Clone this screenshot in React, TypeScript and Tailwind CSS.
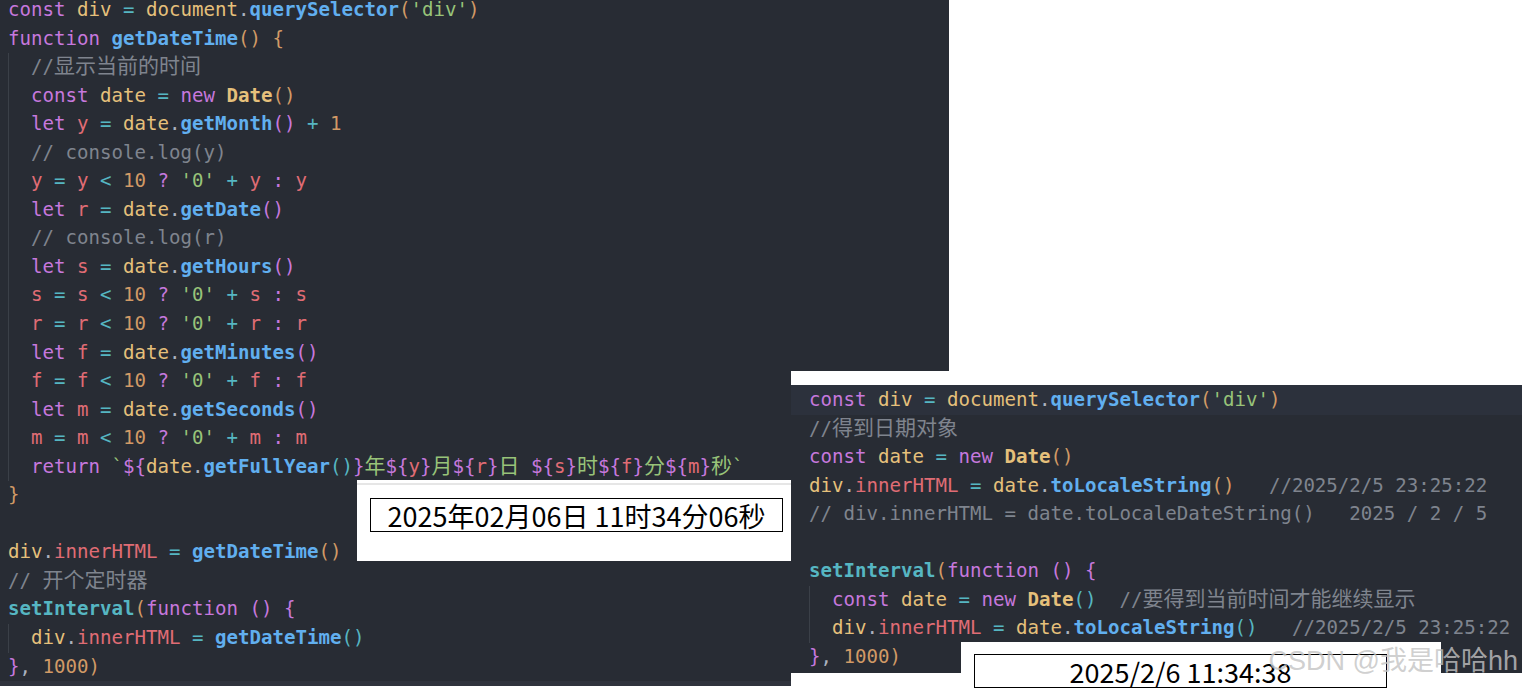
import React from "react";

const C: Record<string, string> = {
  k: "text-[#c678dd]",
  v: "text-[#e5c07b]",
  V: "text-[#e5c07b] font-bold",
  o: "text-[#56b6c2]",
  f: "text-[#61afef] font-bold",
  F: "text-[#56b6c2] font-bold",
  p: "text-[#abb2bf]",
  n: "text-[#d19a66]",
  s: "text-[#98c379]",
  r: "text-[#e06c75]",
  c: "text-[#7f848e]",
  b1: "text-[#d19a66]",
  b2: "text-[#c678dd]",
  b3: "text-[#56b6c2]",
  t: "text-[#c678dd]",
};

function renderText(text: string, key: string) {
  const parts = text.split(/([\u3000-\u9fff\uff00-\uffef]+)/);
  return parts.map((part, i) =>
    /[\u3000-\u9fff\uff00-\uffef]/.test(part) ? (
      <span key={key + "-" + i} className="font-['Noto_Sans_CJK_SC',sans-serif] text-[21px] leading-[0px]">
        {part}
      </span>
    ) : (
      <React.Fragment key={key + "-" + i}>{part}</React.Fragment>
    )
  );
}

function Line({ src }: { src: string }) {
  const segs = src === "" ? [] : src.split("|");
  return (
    <div className="h-[28.55px] leading-[28.55px] whitespace-pre">
      {segs.map((seg, i) => {
        const idx = seg.indexOf("~");
        if (idx > 0 && idx <= 2) {
          const type = seg.slice(0, idx);
          const text = seg.slice(idx + 1);
          return (
            <span key={i} className={C[type]}>
              {renderText(text, String(i))}
            </span>
          );
        }
        return (
          <span key={i} className="text-[#abb2bf]">
            {renderText(seg, String(i))}
          </span>
        );
      })}
      {segs.length === 0 ? " " : null}
    </div>
  );
}

const leftTop = [
  "k~const| |v~div| |o~=| |v~document|p~.|f~querySelector|b1~(|s~'div'|b1~)",
  "k~function| |f~getDateTime|b1~()| |b1~{",
];

const leftBody = [
  "  |c~//显示当前的时间",
  "  |k~const| |v~date| |o~=| |k~new| |V~Date|b1~()",
  "  |k~let| |r~y| |o~=| |v~date|p~.|f~getMonth|b2~()| |o~+| |n~1",
  "  |c~// console.log(y)",
  "  |r~y| |o~=| |r~y| |o~<| |n~10| |k~?| |s~'0'| |o~+| |r~y| |k~:| |r~y",
  "  |k~let| |r~r| |o~=| |v~date|p~.|f~getDate|b2~()",
  "  |c~// console.log(r)",
  "  |k~let| |r~s| |o~=| |v~date|p~.|f~getHours|b2~()",
  "  |r~s| |o~=| |r~s| |o~<| |n~10| |k~?| |s~'0'| |o~+| |r~s| |k~:| |r~s",
  "  |r~r| |o~=| |r~r| |o~<| |n~10| |k~?| |s~'0'| |o~+| |r~r| |k~:| |r~r",
  "  |k~let| |r~f| |o~=| |v~date|p~.|f~getMinutes|b2~()",
  "  |r~f| |o~=| |r~f| |o~<| |n~10| |k~?| |s~'0'| |o~+| |r~f| |k~:| |r~f",
  "  |k~let| |r~m| |o~=| |v~date|p~.|f~getSeconds|b2~()",
  "  |r~m| |o~=| |r~m| |o~<| |n~10| |k~?| |s~'0'| |o~+| |r~m| |k~:| |r~m",
  "  |k~return| |s~`|t~${|v~date|p~.|f~getFullYear|b3~()|t~}|s~年|t~${|r~y|t~}|s~月|t~${|r~r|t~}|s~日 |t~${|r~s|t~}|s~时|t~${|r~f|t~}|s~分|t~${|r~m|t~}|s~秒`",
];

const leftMid = [
  "b1~}",
  "",
  "v~div|p~.|r~innerHTML| |o~=| |f~getDateTime|b1~()",
  "c~// 开个定时器",
  "F~setInterval|b1~(|k~function| |b2~()| |b2~{",
];

const leftInner = ["  |v~div|p~.|r~innerHTML| |o~=| |f~getDateTime|b3~()"];
const leftEnd = ["b2~}|p~,| |n~1000|b1~)"];

const rightTop = [
  "c~//得到日期对象",
  "k~const| |v~date| |o~=| |k~new| |V~Date|b1~()",
  "v~div|p~.|r~innerHTML| |o~=| |v~date|p~.|f~toLocaleString|b1~()|   |c~//2025/2/5 23:25:22",
  "c~// div.innerHTML = date.toLocaleDateString()   2025 / 2 / 5",
  "",
  "F~setInterval|b1~(|k~function| |b2~()| |b2~{",
];

const rightInner = [
  "  |k~const| |v~date| |o~=| |k~new| |V~Date|b3~()|  |c~//要得到当前时间才能继续显示",
  "  |v~div|p~.|r~innerHTML| |o~=| |v~date|p~.|f~toLocaleString|b3~()|   |c~//2025/2/5 23:25:22",
];

const mono = "font-['DejaVu_Sans_Mono','Noto_Sans_CJK_SC',monospace] text-[19.1px]";

export default function App() {
  return (
    <div className="relative w-[1522px] h-[694px] overflow-hidden bg-white">
      {/* left editor screenshot */}
      <div className="w-[949px] h-[686px] bg-[#282c34] flex flex-col overflow-hidden">
        <div className={"flex-1 pl-[8px] -mt-[4px] " + mono}>
          {leftTop.map((l, i) => (
            <Line key={i} src={l} />
          ))}
          <div className="border-l border-[#3b4048]">
            <div className="-ml-px">
              {leftBody.map((l, i) => (
                <Line key={i} src={l} />
              ))}
            </div>
          </div>
          {leftMid.map((l, i) => (
            <Line key={i} src={l} />
          ))}
          <div className="border-l border-[#3b4048]">
            <div className="-ml-px">
              {leftInner.map((l, i) => (
                <Line key={i} src={l} />
              ))}
            </div>
          </div>
          {leftEnd.map((l, i) => (
            <Line key={i} src={l} />
          ))}
        </div>
        <div className="h-[7px] bg-[#2f333d]" />
      </div>

      {/* right editor screenshot */}
      <div className="absolute left-[791px] top-[371px] w-[731px] h-[323px] bg-white flex flex-col">
        <div className="h-[14px]" />
        <div className={"h-[288px] bg-[#282c34] overflow-hidden " + mono}>
          <div className="bg-[#2c313c] pl-[18px] pt-px">
            <Line src="k~const| |v~div| |o~=| |v~document|p~.|f~querySelector|b1~(|s~'div'|b1~)" />
          </div>
          <div className="pl-[18px]">
            {rightTop.map((l, i) => (
              <Line key={i} src={l} />
            ))}
            <div className="border-l border-[#3b4048]">
              <div className="-ml-px">
                {rightInner.map((l, i) => (
                  <Line key={i} src={l} />
                ))}
              </div>
            </div>
            <Line src="b2~}|p~,| |n~1000|b1~)" />
          </div>
        </div>
      </div>

      {/* output box 1 */}
      <div className="absolute left-[357px] top-[480px] w-[434px] h-[81px] bg-white flex flex-col pt-[3px]">
        <div className="h-[2px] bg-[#e6e6e6]" />
        <div className="mt-[13px] ml-[13px] w-[413px] h-[34px] border border-black flex items-center justify-center">
          <span className="font-['Noto_Sans_CJK_SC',sans-serif] text-[27px] leading-none text-black whitespace-pre">
            2025年02月06日 11时34分06秒
          </span>
        </div>
      </div>

      {/* output box 2 */}
      <div className="absolute left-[961px] top-[642px] w-[480px] h-[52px] bg-white pt-[12px] pl-[13px]">
        <div className="w-[413px] h-[34px] border border-black flex items-center justify-center">
          <span className="font-['Noto_Sans_CJK_SC',sans-serif] text-[27px] leading-none text-black whitespace-pre">
            2025/2/6 11:34:38
          </span>
        </div>
      </div>

      {/* watermark */}
      <div className="absolute right-[4px] top-[648px] pointer-events-none font-['Liberation_Sans','Noto_Sans_CJK_SC',sans-serif] text-[27px] leading-none text-[rgba(195,195,195,0.8)] whitespace-pre">
        CSDN @我是哈哈hh
      </div>
    </div>
  );
}
